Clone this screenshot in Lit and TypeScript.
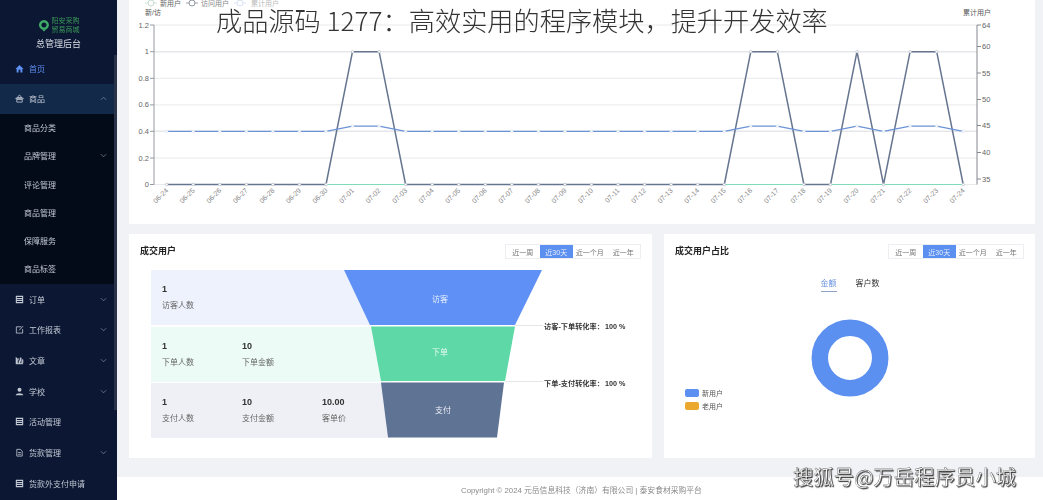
import { LitElement, html, css, svg } from "lit";
import { customElement } from "lit/decorators.js";

const X0 = 166.7, STEP = 26.55;
const cx = (i: number) => X0 + i * STEP;
const ly = (v: number) => 184.5 - v * 132.8;
const days = [
  "06-24","06-25","06-26","06-27","06-28","06-29","06-30","07-01","07-02","07-03","07-04","07-05","07-06","07-07","07-08","07-09",
  "07-10","07-11","07-12","07-13","07-14","07-15","07-16","07-17","07-18","07-19","07-20","07-21","07-22","07-23","07-24",
];
const peaks = [7, 8, 22, 23, 26, 28, 29];
const gray = days.map((_, i) => (peaks.includes(i) ? 1 : 0));
const blue = days.map((_, i) => (peaks.includes(i) ? 0.44 : 0.4));
const pts = (a: number[]) => a.map((v, i) => `${cx(i).toFixed(1)},${ly(v).toFixed(1)}`).join(" ");

const icons: Record<string, unknown> = {
  home: svg`<path d="M.5 5.5 5 1l4.500 4.500H8.200V9.500H6V6.500H4V9.500H1.800V5.500z" fill="currentColor"/>`,
  shop: svg`<path d="M5 1 2.500 4h5zM1 4.500h8v1H1zM2 6h6v3H2z" fill="none" stroke="currentColor" stroke-width=".9"/>`,
  order: svg`<path d="M1.500 1.500h7v7h-7zM1.500 4h7M1.500 6.200h7" fill="none" stroke="currentColor" stroke-width="1.200"/>`,
  report: svg`<path d="M7 2H1.500v7h7V4.500M4.500 6 9 1.200" fill="none" stroke="currentColor" stroke-width=".9"/>`,
  article: svg`<path d="M1 1v8h8M3 8V3h1.400v5zM5.600 8V2H7v6zM8 8V4h1v4z" fill="currentColor" stroke="currentColor" stroke-width=".4"/>`,
  user: svg`<circle cx="5" cy="3" r="2.200" fill="currentColor"/><path d="M.8 9.300c0-3 8.400-3 8.400 0z" fill="currentColor"/>`,
  loan: svg`<path d="M2 1.500h4l2 2V9H2z M3.500 5h3M3.500 7h3" fill="none" stroke="currentColor" stroke-width=".9"/>`,
};

interface Item { label: string; icon?: string; chevron?: "up" | "down"; }
const topItems: Item[] = [
  { label: "订单", icon: "order", chevron: "down" },
  { label: "工作报表", icon: "report", chevron: "down" },
  { label: "文章", icon: "article", chevron: "down" },
  { label: "学校", icon: "user", chevron: "down" },
  { label: "活动管理", icon: "order" },
  { label: "货款管理", icon: "loan", chevron: "down" },
  { label: "货款外支付申请", icon: "order" },
];
const subItems: Item[] = [
  { label: "商品分类" },
  { label: "品牌管理", chevron: "down" },
  { label: "评论管理" },
  { label: "商品管理" },
  { label: "保障服务" },
  { label: "商品标签" },
];

const chev = (d?: "up" | "down") =>
  d
    ? html`<svg class="chev" viewBox="0 0 8 5"><path d=${d === "down" ? "M1 1l3 3 3-3" : "M1 4l3-3 3 3"} fill="none" stroke="currentColor" stroke-width=".8"/></svg>`
    : "";
const ico = (n?: string) =>
  n ? html`<svg class="ico" viewBox="0 0 10 10">${icons[n]}</svg>` : "";

@customElement("app-root")
export class AppRoot extends LitElement {
  static styles = css`
    :host { display: block; width: 1043px; height: 500px; overflow: hidden; position: relative; background: #f1f2f6;
      font-family: "Liberation Sans", "Noto Sans CJK SC", sans-serif; color: #333; }
    .page { display: flex; height: 500px; filter: blur(0.5px); }
    .side { width: 117px; flex: none; height: 500px; background: #0b1733; color: #c3c9d4; position: relative; overflow: hidden; }
    .scroll { position: absolute; left: 114px; top: 55px; width: 3px; height: 355px; background: #2a3348; }
    .brand { height: 53px; display: flex; flex-direction: column; align-items: center; padding-top: 15px; box-sizing: border-box; }
    .logo { display: flex; gap: 2px; align-items: center; height: 20px; }
    .logo svg { width: 12px; height: 13px; }
    .logo-t { display: flex; flex-direction: column; font-size: 7px; line-height: 9.500px; color: #3a9a58; }
    .brand-name { font-size: 9px; line-height: 12px; margin-top: 3px; color: #d8dce4; }
    .it { display: flex; align-items: center; height: 30.700px; padding-left: 15px; font-size: 8px; position: relative; box-sizing: border-box; }
    .ico { width: 9px; height: 9px; margin-right: 5px; flex: none; }
    .chev { width: 7px; height: 5px; position: absolute; left: 100px; color: #8890a0; }
    .home { color: #5f8ff0; }
    .open { background: #12294a; height: 30px; }
    .subs { background: #030a18; padding-bottom: 1px; }
    .sub { height: 28.200px; padding-left: 24px; }
    .main { flex: 1; min-width: 0; display: flex; flex-direction: column; }
    .content { padding: 0 8px 0 12px; display: flex; flex-direction: column; gap: 10px; height: 477px; box-sizing: border-box; }
    .card { background: #fff; height: 224px; box-sizing: border-box; }
    .chart { display: block; width: 906px; height: 224px; }
    .chart text { font-family: "Liberation Sans", "Noto Sans CJK SC", sans-serif; }
    .bottom { display: flex; gap: 12px; }
    .b1 { width: 523px; padding: 10px 11px 0; }
    .b2 { width: 371px; padding: 10px 11px 0; position: relative; }
    .head { display: flex; justify-content: space-between; align-items: center; height: 15px; }
    .title { font-size: 9px; font-weight: 700; color: #222; position: relative; top: -1px; }
    .seg { display: flex; border: 1px solid #eceef1; font-size: 7px; color: #777; height: 15px; box-sizing: border-box; }
    .seg span { width: 33.500px; display: flex; align-items: center; justify-content: center; }
    .seg .on { background: #5b8ff0; color: #e8eefc; }
    .funnel { position: relative; margin: 11px 0 0 11px; width: 400px; height: 168px; }
    .row { height: 55px; margin-bottom: 1.500px; display: grid; grid-template-columns: 80px 80px 80px; padding-left: 11px; box-sizing: border-box; align-content: center; width: 240px; }
    .r1 { background: #eef2fd; }
    .r2 { background: #ecfbf5; }
    .r3 { background: #eff0f5; }
    .cell { display: flex; flex-direction: column; gap: 7px; }
    .num { font-size: 9px; font-weight: 700; line-height: 10px; color: #333; }
    .lab { font-size: 8px; line-height: 10px; color: #666; }
    .fsvg { position: absolute; left: 0; top: 0; width: 420px; height: 168px; overflow: visible; }
    .fsvg text { font-family: "Liberation Sans", "Noto Sans CJK SC", sans-serif; font-size: 8px; }
    .fsvg .note { font-size: 7.200px; font-weight: 700; fill: #333; }
    .tabs { display: flex; justify-content: center; gap: 19px; margin-top: 18px; margin-left: 1px; font-size: 8px; }
    .tab { height: 15px; line-height: 13px; color: #333; box-sizing: border-box; }
    .tab.on { color: #6a93e0; border-bottom: 1.500px solid #8ea3c4; }
    .donut { display: block; width: 80px; height: 80px; margin: 26px 0 0 135px; }
    .legend { position: absolute; left: 21px; top: 154px; display: flex; flex-direction: column; gap: 4.500px; font-size: 7px; color: #555; }
    .lg { display: flex; align-items: center; gap: 3px; height: 9px; }
    .sw { width: 14px; height: 8px; border-radius: 2px; }
    .footer { height: 23px; background: #fff; display: flex; align-items: center; justify-content: center; font-size: 7.800px; color: #8a8a8a; padding: 2px 0 0 3px; box-sizing: border-box; }
    .headline { position: absolute; left: 216px; top: 3px; font-size: 26.200px; line-height: 34px; font-weight: 200; color: #333; white-space: nowrap; font-family: "Noto Sans CJK SC", sans-serif; }
    .mark { position: absolute; left: 793px; top: 462px; font-size: 20.400px; line-height: 28px; color: #fff; white-space: nowrap;
      font-family: "Noto Sans CJK SC", sans-serif; -webkit-text-stroke: 0.3px #333; text-shadow: 1px 1px 1px #333; }
  `;

  private chart() {
    const gridY = [25, 51.7, 78.3, 104.9, 131.3, 158, 184.5];
    const lv = ["1.2", "1", "0.8", "0.6", "0.4", "0.2", "0"];
    const rv: [string, number][] = [["64", 25], ["60", 46.5], ["55", 73], ["50", 99.5], ["45", 125.5], ["40", 152.5], ["35", 179]];
    const ox = 129;
    return html`<svg class="chart" viewBox="${ox} 0 906 224" xmlns="http://www.w3.org/2000/svg">
      ${gridY.map((y) => svg`<line x1="154" x2="977" y1=${y} y2=${y} stroke="#e5e7ea" stroke-width=${y === 51.7 || y === 131.3 ? 1.4 : 0.9}/>`)}
      <path d="M154 25V184.500M150 25h4M150 51.700h4M150 78.300h4M150 104.900h4M150 131.300h4M150 158h4M150 184.500h4" fill="none" stroke="#8b8f96" stroke-width=".9"/>
      <path d="M977 25V184.500M977 25h4M977 46.500h4M977 73h4M977 99.500h4M977 125.500h4M977 152.500h4M977 179h4" fill="none" stroke="#777b82" stroke-width=".9"/>
      ${lv.map((t, i) => svg`<text x="149" y=${gridY[i] + 2.5} text-anchor="end" font-size="7.5" fill="#666">${t}</text>`)}
      ${rv.map(([t, y]) => svg`<text x="982" y=${y + 2.5} font-size="7.5" fill="#666">${t}</text>`)}
      <text x="145" y="15" font-size="7" fill="#555">新/访</text>
      <text x="963" y="15" font-size="7" fill="#555">累计用户</text>
      <g font-size="7" fill="#666">
        <path d="M145 3h12" stroke="#cfe6da" stroke-width="1"/><circle cx="151" cy="3" r="3" fill="#fff" stroke="#c8dcd2"/>
        <text x="160" y="5.500">新用户</text>
        <path d="M186 3h12" stroke="#9aa2ae" stroke-width="1"/><circle cx="192" cy="3" r="3" fill="#fff" stroke="#8e96a3"/>
        <text x="201" y="5.500" fill="#888">访问用户</text>
        <path d="M234 3h12" stroke="#dce7fb" stroke-width="1"/><circle cx="240" cy="3" r="3" fill="#fff" stroke="#d6e2f8"/>
        <text x="251" y="5.500" fill="#bbb">累计用户</text>
      </g>
      <line x1=${cx(0)} x2=${cx(30)} y1="184.500" y2="184.500" stroke="#7fdcb8" stroke-width="1"/>
      <polyline points=${pts(gray)} fill="none" stroke="#66758f" stroke-width="1.500" stroke-linejoin="round"/>
      <polyline points=${pts(blue)} fill="none" stroke="#6c93d6" stroke-width="1.400" stroke-linejoin="round"/>
      ${days.map((_, i) => svg`
        <circle cx=${cx(i)} cy=${ly(blue[i])} r="1.300" fill="#fff" stroke="#d3ddef" stroke-width=".6"/>
        <circle cx=${cx(i)} cy=${ly(gray[i])} r="1.300" fill="#fff" stroke="#aeb6c3" stroke-width=".6"/>`)}
      ${days.map((d, i) => svg`<text transform="translate(${cx(i) + 2} 191) rotate(-45)" text-anchor="end" font-size="7" fill="#888">${d}</text>`)}
    </svg>`;
  }

  private funnel() {
    return html`<svg class="fsvg" viewBox="151 270 420 168">
      <path d="M515 325.500H543M505 381.500H543" stroke="#dedfe2" stroke-width=".8"/>
      <polygon points="344,270 542,270 515,325 370,325" fill="#5f90f5"/>
      <polygon points="371,326.500 515,326.500 505,381 381,381" fill="#5fd8a8"/>
      <polygon points="381,382.500 504,382.500 497,437.500 388,437.500" fill="#5f7394"/>
      <text x="440" y="302" text-anchor="middle" fill="#e8f0ff">访客</text>
      <text x="440" y="355" text-anchor="middle" fill="#e8fbf3">下单</text>
      <text x="443" y="413" text-anchor="middle" fill="#eef1f6">支付</text>
      <text class="note" x="544" y="329">访客-下单转化率：</text>
      <text class="note" x="605" y="329">100 %</text>
      <text class="note" x="544" y="386">下单-支付转化率：</text>
      <text class="note" x="605" y="386">100 %</text>
    </svg>`;
  }

  private seg() {
    return html`<div class="seg"><span>近一周</span><span class="on">近30天</span><span>近一个月</span><span>近一年</span></div>`;
  }

  render() {
    const cell = (n: string, l: string) => html`<div class="cell"><span class="num">${n}</span><span class="lab">${l}</span></div>`;
    return html`
      <div class="page">
        <aside class="side">
          <div class="brand">
            <div class="logo">
              <svg viewBox="0 0 12 13"><path d="M6 2.200a3.800 3.800 0 1 1-.1 0z" fill="none" stroke="#3fae68" stroke-width="2.400"/><path d="M4 10.500h4L6 12.500z" fill="#3fae68"/></svg>
              <div class="logo-t"><span>阳安采购</span><span>贸易商城</span></div>
            </div>
            <div class="brand-name">总管理后台</div>
          </div>
          <div class="it home">${ico("home")}<span>首页</span></div>
          <div class="it open">${ico("shop")}<span>商品</span>${chev("up")}</div>
          <div class="subs">
            ${subItems.map((s) => html`<div class="it sub"><span>${s.label}</span>${chev(s.chevron)}</div>`)}
          </div>
          ${topItems.map((s) => html`<div class="it">${ico(s.icon)}<span>${s.label}</span>${chev(s.chevron)}</div>`)}
          <div class="scroll"></div>
        </aside>
        <div class="main">
          <div class="content">
            <section class="card">${this.chart()}</section>
            <div class="bottom">
              <section class="card b1">
                <div class="head"><span class="title">成交用户</span>${this.seg()}</div>
                <div class="funnel">
                  <div class="row r1">${cell("1", "访客人数")}</div>
                  <div class="row r2">${cell("1", "下单人数")}${cell("10", "下单金额")}</div>
                  <div class="row r3">${cell("1", "支付人数")}${cell("10", "支付金额")}${cell("10.00", "客单价")}</div>
                  ${this.funnel()}
                </div>
              </section>
              <section class="card b2">
                <div class="head"><span class="title">成交用户占比</span>${this.seg()}</div>
                <div class="tabs"><span class="tab on">金额</span><span class="tab">客户数</span></div>
                <svg class="donut" viewBox="0 0 80 80"><circle cx="40" cy="40" r="30.200" fill="none" stroke="#5b8ff0" stroke-width="16.500"/></svg>
                <div class="legend">
                  <div class="lg"><span class="sw" style="background:#5b8ff0"></span>新用户</div>
                  <div class="lg"><span class="sw" style="background:#eaa92e"></span>老用户</div>
                </div>
              </section>
            </div>
          </div>
          <footer class="footer">Copyright © 2024 元岳信息科技（济南）有限公司 | 泰安食材采购平台</footer>
        </div>
      </div>
      <div class="headline">成品源码 1277：高效实用的程序模块，提升开发效率</div>
      <div class="mark">搜狐号@万岳程序员小城</div>
    `;
  }
}
